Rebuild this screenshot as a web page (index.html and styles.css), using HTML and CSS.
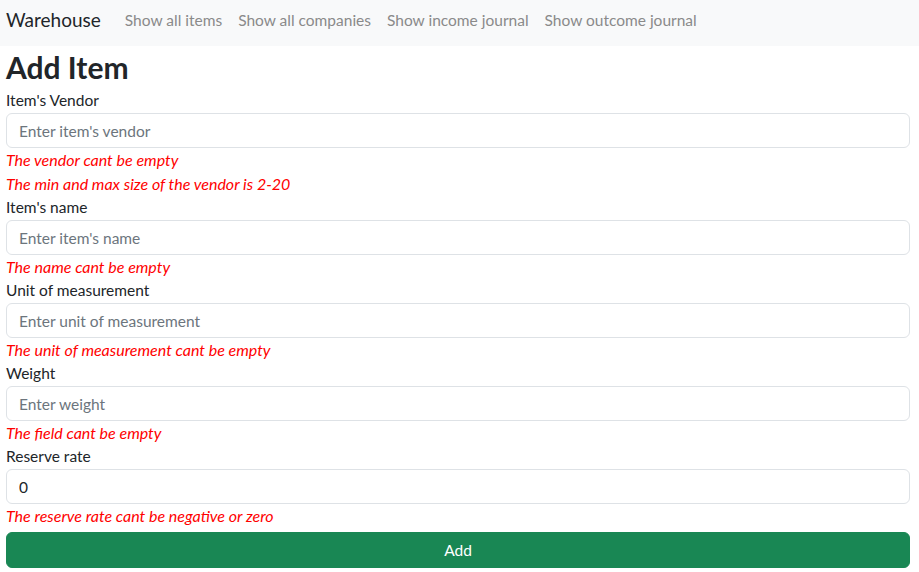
FILE: index.html
```html
<!DOCTYPE html>
<html lang="en">
<head>
<meta charset="utf-8">
<title>Add Item</title>
<link rel="stylesheet" href="styles.css">
</head>
<body>
<nav class="navbar">
  <a class="brand" href="#">Warehouse</a>
  <ul class="nav-links">
    <li><a class="nav-link" href="#">Show all items</a></li>
    <li><a class="nav-link" href="#">Show all companies</a></li>
    <li><a class="nav-link" href="#">Show income journal</a></li>
    <li><a class="nav-link" href="#">Show outcome journal</a></li>
  </ul>
</nav>
<main class="page">
  <h1 class="title">Add Item</h1>
  <form class="form">
    <div class="field">
      <label class="label">Item's Vendor</label>
      <input class="input" type="text" placeholder="Enter item's vendor">
      <div class="error">The vendor cant be empty</div>
      <div class="error">The min and max size of the vendor is 2-20</div>
    </div>
    <div class="field">
      <label class="label">Item's name</label>
      <input class="input" type="text" placeholder="Enter item's name">
      <div class="error">The name cant be empty</div>
    </div>
    <div class="field">
      <label class="label">Unit of measurement</label>
      <input class="input" type="text" placeholder="Enter unit of measurement">
      <div class="error">The unit of measurement cant be empty</div>
    </div>
    <div class="field">
      <label class="label">Weight</label>
      <input class="input" type="text" placeholder="Enter weight">
      <div class="error">The field cant be empty</div>
    </div>
    <div class="field">
      <label class="label">Reserve rate</label>
      <input class="input" type="text" value="0">
      <div class="error">The reserve rate cant be negative or zero</div>
    </div>
    <button class="btn-add" type="button">Add</button>
  </form>
</main>
</body>
</html>
```
FILE: styles.css
```css
* { box-sizing: border-box; }
html, body { margin: 0; padding: 0; }
body {
  font-family: Lato, "Open Sans", sans-serif;
  font-size: 15.5px;
  line-height: 24px;
  color: #212529;
  background: #fff;
}
.navbar {
  display: flex;
  align-items: center;
  height: 46px;
  background: #f8f9fa;
  padding: 0 6px 6px;
}
.brand {
  font-size: 19px;
  color: #212529;
  text-decoration: none;
  margin-right: 16px;
}
.nav-links {
  display: flex;
  list-style: none;
  margin: 0;
  padding: 0;
}
.nav-link {
  display: block;
  padding: 0 8px;
  color: #8a8a8a;
  text-decoration: none;
}
.page {
  padding: 0 9px 0 6px;
}
.title {
  margin: 0;
  font-size: 30px;
  font-weight: 700;
  line-height: 43px;
}
.form {
  display: flex;
  flex-direction: column;
}
.field {
  display: flex;
  flex-direction: column;
}
.label {
  display: block;
  line-height: 22px;
  padding-bottom: 2px;
}
.input {
  display: block;
  width: 100%;
  height: 35px;
  padding: 0 12px;
  font-family: inherit;
  font-size: 15.5px;
  color: #212529;
  border: 1px solid #dee2e6;
  border-radius: 6px;
  background: #fff;
}
.input::placeholder { color: #6c757d; }
.error {
  color: #ff0000;
  font-style: italic;
  font-size: 16px;
}
.btn-add {
  margin-top: 4px;
  height: 36px;
  width: 100%;
  border: 1px solid #198754;
  border-radius: 6px;
  background: #198754;
  color: #fff;
  font-family: inherit;
  font-size: 15.5px;
}
```
